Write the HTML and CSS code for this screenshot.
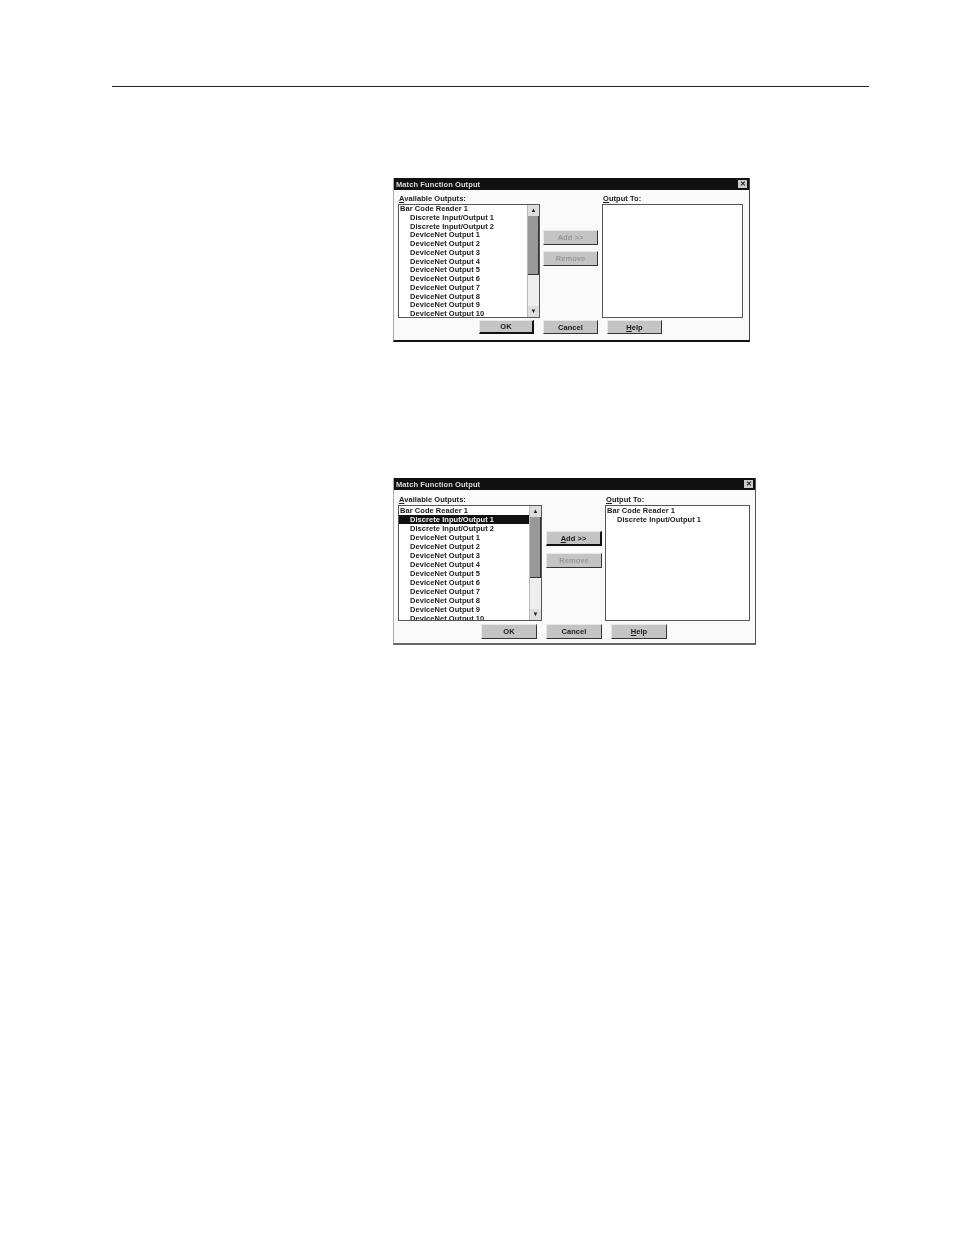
FILE: index.html
```html
<!DOCTYPE html>
<html lang="en">
<head>
    <meta charset="UTF-8">
    <title>Match Function Output</title>
    <link rel="stylesheet" href="styles.css">
</head>
<body>
    <div class="page">
        <hr class="rule">

        <!-- Nothing selected -->
        <div class="dialog first">
            <div class="title-bar">
                <span>Match Function Output</span>
                <span class="close">&#10005;</span>
            </div>
            <div class="dialog-body">
                <div class="column">
                    <div class="label"><u>A</u>vailable Outputs:</div>
                    <div class="list">
                        <div class="items">
                            <div class="item">Bar Code Reader 1</div>
                            <div class="item sub">Discrete Input/Output 1</div>
                            <div class="item sub">Discrete Input/Output 2</div>
                            <div class="item sub">DeviceNet Output 1</div>
                            <div class="item sub">DeviceNet Output 2</div>
                            <div class="item sub">DeviceNet Output 3</div>
                            <div class="item sub">DeviceNet Output 4</div>
                            <div class="item sub">DeviceNet Output 5</div>
                            <div class="item sub">DeviceNet Output 6</div>
                            <div class="item sub">DeviceNet Output 7</div>
                            <div class="item sub">DeviceNet Output 8</div>
                            <div class="item sub">DeviceNet Output 9</div>
                            <div class="item sub">DeviceNet Output 10</div>
                        </div>
                        <div class="scrollbar">
                            <div class="arrow">&#9650;</div>
                            <div class="thumb"></div>
                            <div class="track"></div>
                            <div class="arrow">&#9660;</div>
                        </div>
                    </div>
                </div>
                <div class="middle">
                    <button class="btn disabled">Add &gt;&gt;</button>
                    <button class="btn disabled">Remove</button>
                </div>
                <div class="column">
                    <div class="label"><u>O</u>utput To:</div>
                    <div class="list"></div>
                </div>
            </div>
            <div class="actions">
                <button class="btn default">OK</button>
                <button class="btn">Cancel</button>
                <button class="btn"><u>H</u>elp</button>
            </div>
        </div>

        <!-- Discrete Input/Output 1 added -->
        <div class="dialog second">
            <div class="title-bar">
                <span>Match Function Output</span>
                <span class="close">&#10005;</span>
            </div>
            <div class="dialog-body">
                <div class="column">
                    <div class="label"><u>A</u>vailable Outputs:</div>
                    <div class="list">
                        <div class="items">
                            <div class="item">Bar Code Reader 1</div>
                            <div class="item sub selected">Discrete Input/Output 1</div>
                            <div class="item sub">Discrete Input/Output 2</div>
                            <div class="item sub">DeviceNet Output 1</div>
                            <div class="item sub">DeviceNet Output 2</div>
                            <div class="item sub">DeviceNet Output 3</div>
                            <div class="item sub">DeviceNet Output 4</div>
                            <div class="item sub">DeviceNet Output 5</div>
                            <div class="item sub">DeviceNet Output 6</div>
                            <div class="item sub">DeviceNet Output 7</div>
                            <div class="item sub">DeviceNet Output 8</div>
                            <div class="item sub">DeviceNet Output 9</div>
                            <div class="item sub">DeviceNet Output 10</div>
                        </div>
                        <div class="scrollbar">
                            <div class="arrow">&#9650;</div>
                            <div class="thumb"></div>
                            <div class="track"></div>
                            <div class="arrow">&#9660;</div>
                        </div>
                    </div>
                </div>
                <div class="middle">
                    <button class="btn default"><u>A</u>dd &gt;&gt;</button>
                    <button class="btn disabled">Remove</button>
                </div>
                <div class="column">
                    <div class="label"><u>O</u>utput To:</div>
                    <div class="list">
                        <div class="items">
                            <div class="item">Bar Code Reader 1</div>
                            <div class="item sub">Discrete Input/Output 1</div>
                        </div>
                    </div>
                </div>
            </div>
            <div class="actions">
                <button class="btn">OK</button>
                <button class="btn">Cancel</button>
                <button class="btn"><u>H</u>elp</button>
            </div>
        </div>
    </div>
</body>
</html>
```

FILE: styles.css
```css
/* General Styles */
body {
    margin: 0;
    padding: 0;
    background-color: white;
    font-family: "Liberation Sans", Arial, sans-serif;
    color: #1a1a1a;
}

.page {
    height: 1235px;
    padding: 86px 0 0 112px;
    box-sizing: border-box;
    overflow: hidden;
}

.rule {
    width: 757px;
    height: 1px;
    margin: 0;
    border: none;
    background-color: #222;
}

/* Dialogs */
.dialog {
    margin-left: 281px;
    box-sizing: border-box;
    background-color: #fafafa;
    border-left: 1px solid #aaa;
    filter: blur(0.55px);
}

.dialog.first {
    width: 357px;
    height: 164px;
    margin-top: 91px;
    border-right: 1px solid #444;
    border-bottom: 2px solid #111;
}

.dialog.second {
    width: 363px;
    height: 167px;
    margin-top: 136px;
    border-right: 1px solid #555;
    border-bottom: 2px solid #666;
}

.title-bar {
    display: flex;
    align-items: center;
    justify-content: space-between;
    height: 12px;
    padding: 0 2px 0 2px;
    background-color: #111;
    color: #ddd;
    font-size: 7.5px;
    font-weight: bold;
    letter-spacing: 0.1px;
}

.close {
    display: flex;
    align-items: center;
    justify-content: center;
    width: 9px;
    height: 8px;
    background-color: #ccc;
    color: #222;
    font-size: 7px;
    letter-spacing: 0;
}

.dialog-body {
    display: flex;
    align-items: flex-end;
    padding-left: 4px;
}

.first .dialog-body {
    gap: 3px;
    height: 128px;
}

.second .dialog-body {
    gap: 4px;
    height: 131px;
}

.column {
    display: flex;
    flex-direction: column;
}

.first .column:first-child { width: 142px; }
.first .column:last-child { width: 141px; margin-left: 1px; }
.second .column:first-child { width: 144px; }
.second .column:last-child { width: 145px; margin-left: -1px; }

.label {
    height: 9px;
    padding: 0 0 1px 1px;
    font-size: 7.5px;
    font-weight: bold;
    line-height: 9px;
    letter-spacing: 0.05px;
}

/* Lists */
.list {
    display: flex;
    box-sizing: border-box;
    background-color: white;
    border: 1px solid #555;
    overflow: hidden;
}

.first .list { height: 114px; }
.second .list { height: 116px; }

.items {
    flex: 1;
}

.item {
    height: 8.77px;
    padding-left: 1px;
    font-size: 7.5px;
    font-weight: bold;
    line-height: 8.77px;
    letter-spacing: 0.05px;
    white-space: nowrap;
}

.second .item {
    height: 9px;
    line-height: 9px;
}

.item.sub {
    padding-left: 11px;
}

.item.selected {
    background-color: #111;
    color: #eee;
}

.scrollbar {
    display: flex;
    flex-direction: column;
    width: 11px;
    background-color: #eee;
    border-left: 1px solid #bbb;
}

.arrow {
    height: 11px;
    background-color: #ddd;
    font-size: 6px;
    line-height: 11px;
    text-align: center;
}

.thumb {
    height: 59px;
    background-color: #999;
    border-right: 1px solid #333;
    border-bottom: 1px solid #333;
    box-sizing: border-box;
}

.second .thumb {
    height: 61px;
}

.track {
    flex: 1;
}

/* Buttons */
.btn {
    box-sizing: border-box;
    padding: 0;
    background-color: #c4c4c4;
    border: 1px solid #e8e8e8;
    border-right: 1px solid #333;
    border-bottom: 1px solid #333;
    color: #1a1a1a;
    font-family: inherit;
    font-size: 7.5px;
    font-weight: bold;
    letter-spacing: 0.05px;
}

.btn.default {
    border-right: 2px solid #111;
    border-bottom: 2px solid #111;
}

.btn.disabled {
    color: #999;
}

.middle {
    display: flex;
    flex-direction: column;
    flex-shrink: 0;
}

.first .middle {
    gap: 6px;
    width: 55px;
    margin-bottom: 52px;
}

.second .middle {
    gap: 7px;
    width: 56px;
    margin-bottom: 53px;
}

.first .middle .btn { height: 15px; }
.second .middle .btn { height: 15px; }

.actions {
    display: flex;
}

.first .actions {
    gap: 9px;
    padding: 2px 0 0 85px;
}

.second .actions {
    gap: 9px;
    padding: 3px 0 0 87px;
}

.first .actions .btn { width: 55px; height: 14px; }
.second .actions .btn { width: 56px; height: 15px; }
```
